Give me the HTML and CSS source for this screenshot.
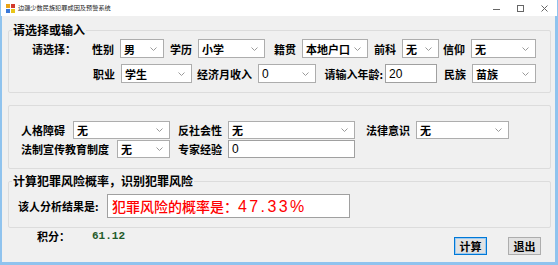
FILE: index.html
```html
<!DOCTYPE html>
<html lang="zh-CN">
<head>
<meta charset="utf-8">
<title>边疆少数民族犯罪成因及预警系统</title>
<link rel="stylesheet" href="styles.css">
</head>
<body>
<div class="window">
  <div class="titlebar">
    <svg class="appicon" width="9" height="9" viewBox="0 0 9 9">
      <rect x="0" y="0" width="4" height="4" fill="#e8a317"/>
      <rect x="5" y="0" width="4" height="4" fill="#d33a2c"/>
      <rect x="0" y="5" width="4" height="4" fill="#3b78d8"/>
      <rect x="5" y="5" width="4" height="4" fill="#e8c417"/>
    </svg>
    <span class="title">边疆少数民族犯罪成因及预警系统</span>
    <div class="winctl">
      <svg width="7" height="7" viewBox="0 0 7 7"><line x1="0" y1="4.5" x2="7" y2="4.5" stroke="#666" stroke-width="1"/></svg>
      <svg width="7" height="7" viewBox="0 0 7 7"><rect x="0.5" y="0.5" width="6" height="6" fill="none" stroke="#666" stroke-width="1"/></svg>
      <svg width="7" height="7" viewBox="0 0 7 7"><path d="M0.5 0.5L6.5 6.5M6.5 0.5L0.5 6.5" stroke="#666" stroke-width="1"/></svg>
    </div>
  </div>
  <div class="client">
    <fieldset class="group g1">
      <legend>请选择或输入</legend>
      <div class="row r1">
        <span class="lbl lead">请选择：</span>
        <span class="lbl">性别</span>
        <div class="combo"><span>男</span><svg width="7" height="4" viewBox="0 0 7 4"><polyline points="0.5,0.5 3.5,3.5 6.5,0.5" fill="none" stroke="#9a9a9a"/></svg></div>
        <span class="lbl">学历</span>
        <div class="combo"><span>小学</span><svg width="7" height="4" viewBox="0 0 7 4"><polyline points="0.5,0.5 3.5,3.5 6.5,0.5" fill="none" stroke="#9a9a9a"/></svg></div>
        <span class="lbl">籍贯</span>
        <div class="combo"><span>本地户口</span><svg width="7" height="4" viewBox="0 0 7 4"><polyline points="0.5,0.5 3.5,3.5 6.5,0.5" fill="none" stroke="#9a9a9a"/></svg></div>
        <span class="lbl">前科</span>
        <div class="combo"><span>无</span><svg width="7" height="4" viewBox="0 0 7 4"><polyline points="0.5,0.5 3.5,3.5 6.5,0.5" fill="none" stroke="#9a9a9a"/></svg></div>
        <span class="lbl">信仰</span>
        <div class="combo"><span>无</span><svg width="7" height="4" viewBox="0 0 7 4"><polyline points="0.5,0.5 3.5,3.5 6.5,0.5" fill="none" stroke="#9a9a9a"/></svg></div>
      </div>
      <div class="row r2">
        <span class="lbl">职业</span>
        <div class="combo"><span>学生</span><svg width="7" height="4" viewBox="0 0 7 4"><polyline points="0.5,0.5 3.5,3.5 6.5,0.5" fill="none" stroke="#9a9a9a"/></svg></div>
        <span class="lbl">经济月收入</span>
        <div class="combo"><span class="num">0</span><svg width="7" height="4" viewBox="0 0 7 4"><polyline points="0.5,0.5 3.5,3.5 6.5,0.5" fill="none" stroke="#9a9a9a"/></svg></div>
        <span class="lbl tight">请输入年龄:</span>
        <div class="textbox"><span class="num">20</span></div>
        <span class="lbl">民族</span>
        <div class="combo"><span>苗族</span><svg width="7" height="4" viewBox="0 0 7 4"><polyline points="0.5,0.5 3.5,3.5 6.5,0.5" fill="none" stroke="#9a9a9a"/></svg></div>
      </div>
    </fieldset>

    <fieldset class="group g2">
      <div class="row r3">
        <span class="lbl left">人格障碍</span>
        <div class="combo"><span>无</span><svg width="7" height="4" viewBox="0 0 7 4"><polyline points="0.5,0.5 3.5,3.5 6.5,0.5" fill="none" stroke="#9a9a9a"/></svg></div>
        <span class="lbl">反社会性</span>
        <div class="combo"><span>无</span><svg width="7" height="4" viewBox="0 0 7 4"><polyline points="0.5,0.5 3.5,3.5 6.5,0.5" fill="none" stroke="#9a9a9a"/></svg></div>
        <span class="lbl">法律意识</span>
        <div class="combo"><span>无</span><svg width="7" height="4" viewBox="0 0 7 4"><polyline points="0.5,0.5 3.5,3.5 6.5,0.5" fill="none" stroke="#9a9a9a"/></svg></div>
      </div>
      <div class="row r4">
        <span class="lbl left">法制宣传教育制度</span>
        <div class="combo"><span>无</span><svg width="7" height="4" viewBox="0 0 7 4"><polyline points="0.5,0.5 3.5,3.5 6.5,0.5" fill="none" stroke="#9a9a9a"/></svg></div>
        <span class="lbl">专家经验</span>
        <div class="textbox"><span class="num">0</span></div>
      </div>
    </fieldset>

    <fieldset class="group g3">
      <legend>计算犯罪风险概率，识别犯罪风险</legend>
      <div class="row r5">
        <span class="lbl left">该人分析结果是:</span>
        <div class="resultbox">犯罪风险的概率是：<span class="pct">47.33%</span></div>
      </div>
    </fieldset>

    <div class="footer">
      <span class="lbl score-lbl">积分：</span>
      <span class="score">61.12</span>
      <div class="buttons">
        <button class="btn focused" type="button">计算</button>
        <button class="btn" type="button">退出</button>
      </div>
    </div>
  </div>
</div>
</body>
</html>
```

FILE: styles.css
```css
html, body {
  margin: 0;
  padding: 0;
}
body {
  width: 558px;
  height: 265px;
  overflow: hidden;
  font-family: "Noto Sans CJK SC", "Noto Sans", sans-serif;
  color: #000;
  background: #f0f0f0;
}
.window {
  display: flex;
  flex-direction: column;
  width: 558px;
  height: 265px;
}
.titlebar {
  height: 16px;
  flex: none;
  background: #fff;
  display: flex;
  align-items: center;
  padding-left: 5px;
  border-left: 1px solid #8fc3ee;
  border-right: 1px solid #8fc3ee;
}
.appicon {
  margin-right: 3px;
}
.title {
  font-size: 6.2px;
  line-height: 8px;
  color: #222;
}
.winctl {
  margin-left: auto;
  display: flex;
  align-items: center;
  gap: 17px;
  padding-right: 9px;
}
.winctl svg {
  display: block;
}
.client {
  flex: 1;
  display: flex;
  flex-direction: column;
  background: #f0f0f0;
  border: solid #8fc3ee;
  border-width: 0 3px 3px 2px;
  min-height: 0;
}
.group {
  border: 1px solid #dcdcdc;
  border-radius: 2px;
  margin: 0 4px 0 6px;
  padding: 0;
  min-width: 0;
}
.group legend {
  font-size: 12px;
  font-weight: 700;
  line-height: 14px;
  padding: 0 1px;
  margin-left: 3px;
}
.g1 {
  margin-top: 7px;
  padding: 2px 0 9px 0;
}
.g2 {
  margin-top: 12px;
  padding: 15px 0 10px 0;
}
.g3 {
  margin-top: 5px;
  padding: 6px 0 9px 0;
}
.row {
  display: grid;
  align-items: center;
}
.r1 {
  height: 19px;
  padding-left: 23px;
  grid-template-columns: 53px 35px 44px 34px 67px 37px 66px 34px 37px 32px 65px;
}
.r2 {
  height: 19px;
  margin-top: 6px;
  padding-left: 23px;
  grid-template-columns: 89px 71px 66px 58px 69px 52px 35px 64px;
}
.r3 {
  height: 18px;
  padding-left: 12px;
  grid-template-columns: 52px 97px 58px 127px 61px 93px;
}
.r4 {
  height: 18px;
  margin-top: 1px;
  padding-left: 12px;
  grid-template-columns: 96px 53px 58px 127px;
}
.r5 {
  height: 24px;
  padding-left: 9px;
  grid-template-columns: 89px 243px;
}
.lbl {
  font-size: 11px;
  font-weight: 700;
  line-height: 14px;
  text-align: right;
  padding-right: 6px;
  white-space: nowrap;
}
.lbl.lead,
.lbl.left {
  text-align: left;
  padding-right: 0;
}
.lbl.tight {
  padding-right: 2px;
}
.combo,
.textbox {
  height: 100%;
  box-sizing: border-box;
  background: #fff;
  border: 1px solid #adadad;
  display: flex;
  align-items: center;
  padding-left: 3px;
  font-size: 11px;
  font-weight: 700;
  line-height: 14px;
  min-width: 0;
  overflow: hidden;
}
.combo svg {
  margin-left: auto;
  margin-right: 6px;
  flex: none;
}
.textbox {
  border-color: #a0a0a0;
}
.num {
  font-family: "Liberation Sans", Arial, sans-serif;
  font-weight: 400;
  font-size: 12px;
}
.resultbox {
  height: 24px;
  box-sizing: border-box;
  background: #fff;
  border: 1px solid #a0a0a0;
  color: #ff0000;
  font-size: 14px;
  font-weight: 500;
  line-height: 22px;
  padding-left: 4px;
  white-space: nowrap;
  overflow: hidden;
}
.pct {
  font-family: "Liberation Sans", Arial, sans-serif;
  font-size: 16px;
  font-weight: 400;
  letter-spacing: 2.4px;
}
.footer {
  flex: 1;
  display: flex;
  align-items: flex-start;
  padding-left: 35px;
  padding-right: 14px;
}
.score-lbl {
  text-align: left;
  padding-right: 0;
  margin-top: 1px;
  width: 55px;
}
.score {
  font-family: "Liberation Mono", monospace;
  font-size: 11px;
  font-weight: 700;
  color: #1f5a2a;
  line-height: 14px;
  margin-top: 1px;
}
.buttons {
  margin-left: auto;
  margin-top: 9px;
  display: flex;
  gap: 21px;
}
.btn {
  width: 33px;
  height: 18px;
  padding: 0;
  margin: 0;
  background: #e1e1e1;
  border: 1px solid #adadad;
  font-family: "Noto Sans CJK SC", sans-serif;
  font-size: 11px;
  font-weight: 700;
  line-height: 14px;
  color: #000;
}
.btn.focused {
  border: 1px solid #0078d7;
  box-shadow: inset 0 0 0 1px #9ccaf0;
}
```
